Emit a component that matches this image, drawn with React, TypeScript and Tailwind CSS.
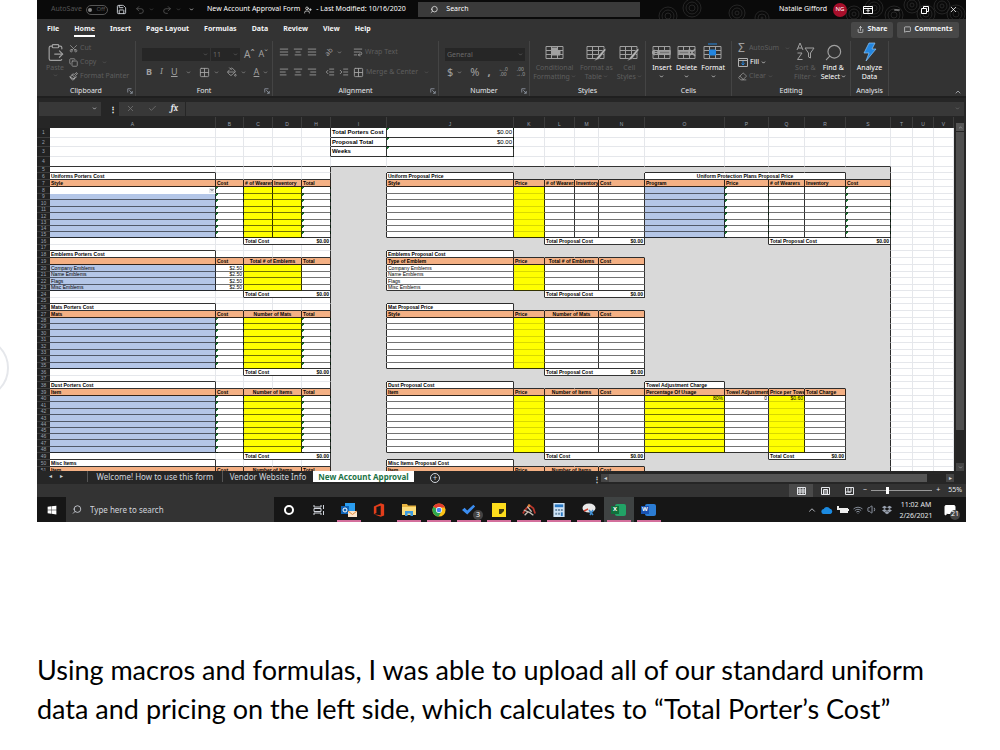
import type { ReactNode } from "react";
import clsx from "clsx";
import {
  AlignCenter,
  AlignJustify,
  AlignLeft,
  AlignRight,
  ChevronDown,
  ChevronUp,
  Check,
  ClipboardPaste,
  Copy,
  Eraser,
  Grid2x2,
  IndentDecrease,
  IndentIncrease,
  MessageSquare,
  Minus,
  PaintBucket,
  Paintbrush,
  Redo2,
  Save,
  Scissors,
  Search,
  Share,
  Undo2,
  UserPlus,
  Volume1,
  Wifi,
  WrapText,
  X,
} from "lucide-react";
import { FaDropbox, FaWindows } from "react-icons/fa";

/* ---------- Sheet data ---------- */

const COLUMNS = [
  { name: "A", width: "w-[166px]" },
  { name: "B", width: "w-[28px]" },
  { name: "C", width: "w-[29px]" },
  { name: "D", width: "w-[29px]" },
  { name: "H", width: "w-[29px]" },
  { name: "I", width: "w-[56px]" },
  { name: "J", width: "w-[127px]" },
  { name: "K", width: "w-[31px]" },
  { name: "L", width: "w-[30px]" },
  { name: "M", width: "w-[24px]" },
  { name: "N", width: "w-[46px]" },
  { name: "O", width: "w-[80px]" },
  { name: "P", width: "w-[44px]" },
  { name: "Q", width: "w-[36px]" },
  { name: "R", width: "w-[41px]" },
  { name: "S", width: "w-[45px]" },
  { name: "T", width: "w-[22px]" },
  { name: "U", width: "w-[21px]" },
  { name: "V", width: "" },
];

const ROW_COUNT = 51;
const TALL_ROWS = [1, 3, 4];
const MEDIUM_ROWS = [6, 7, 8, 10, 12, 16, 18, 19, 20, 22, 24, 26, 27, 30, 32, 34, 36, 38, 39, 41, 43, 47, 49, 50, 51];

type Head = { text: string; span?: number; fill?: string; flag?: boolean; faint?: boolean };

type Block = {
  col: string;
  row: number;
  title: string;
  titleSpan?: number;
  heads: Head[];
  body: number;
  values?: string[][];
  total?: { label: string; col: string; span: number };
};

type Cell = {
  content?: ReactNode;
  span?: number;
  line?: string;
  className: string;
};

const BLUE = "bg-[#b4c6e7]";
const YELLOW = "bg-[#ffff00]";
const ORANGE = "bg-[#f4b084]";

const EMBLEMS = ["Company Emblems", "Name Emblems", "Flags", "Misc Emblems"];

const cost = { label: "Total Cost", col: "C", span: 3 };
const proposal = { label: "Total Proposal Cost", col: "L", span: 3 };

const BLOCKS: Block[] = [
  {
    col: "A",
    row: 6,
    title: "Uniforms Porters Cost",
    heads: [
      { text: "Style", fill: BLUE },
      { text: "Cost", flag: true },
      { text: "# of Wearers", fill: YELLOW },
      { text: "Inventory", fill: YELLOW },
      { text: "Total", flag: true },
    ],
    body: 8,
    total: cost,
  },
  {
    col: "A",
    row: 18,
    title: "Emblems Porters Cost",
    heads: [
      { text: "", fill: BLUE },
      { text: "Cost" },
      { text: "Total # of Emblems", span: 2, fill: YELLOW },
      { text: "Total" },
    ],
    body: 4,
    values: EMBLEMS.map((name) => [name, "$2.50"]),
    total: cost,
  },
  {
    col: "A",
    row: 26,
    title: "Mats Porters Cost",
    heads: [
      { text: "Mats", fill: BLUE },
      { text: "Cost", flag: true },
      { text: "Number of Mats", span: 2, fill: YELLOW },
      { text: "Total", flag: true },
    ],
    body: 8,
    total: cost,
  },
  {
    col: "A",
    row: 38,
    title: "Dust Porters Cost",
    heads: [
      { text: "Item", fill: BLUE },
      { text: "Cost", flag: true },
      { text: "Number of Items", span: 2, fill: YELLOW },
      { text: "Total", flag: true },
    ],
    body: 9,
    total: cost,
  },
  {
    col: "A",
    row: 50,
    title: "Misc Items",
    heads: [{ text: "Item" }, { text: "Cost" }, { text: "Number of Items", span: 2 }, { text: "Total" }],
    body: 0,
  },
  {
    col: "J",
    row: 6,
    title: "Uniform Proposal Price",
    heads: [
      { text: "Style" },
      { text: "Price", fill: YELLOW, faint: true },
      { text: "# of Wearers" },
      { text: "Inventory" },
      { text: "Cost" },
    ],
    body: 8,
    total: proposal,
  },
  {
    col: "J",
    row: 18,
    title: "Emblems Proposal Cost",
    heads: [
      { text: "Type of Emblem" },
      { text: "Price", fill: YELLOW, faint: true },
      { text: "Total # of Emblems", span: 2 },
      { text: "Cost" },
    ],
    body: 4,
    values: EMBLEMS.map((name) => [name]),
    total: proposal,
  },
  {
    col: "J",
    row: 26,
    title: "Mat Proposal Price",
    heads: [
      { text: "Style" },
      { text: "Price", fill: YELLOW, faint: true },
      { text: "Number of Mats", span: 2 },
      { text: "Cost" },
    ],
    body: 8,
    total: proposal,
  },
  {
    col: "J",
    row: 38,
    title: "Dust Proposal Cost",
    heads: [
      { text: "Item" },
      { text: "Price", fill: YELLOW, faint: true },
      { text: "Number of Items", span: 2 },
      { text: "Cost" },
    ],
    body: 9,
    total: { label: "Total Cost", col: "L", span: 3 },
  },
  {
    col: "J",
    row: 50,
    title: "Misc Items Proposal Cost",
    heads: [{ text: "Item" }, { text: "Price" }, { text: "Number of Items", span: 2 }, { text: "Cost" }],
    body: 0,
  },
  {
    col: "O",
    row: 6,
    title: "Uniform Protection Plans Proposal Price",
    titleSpan: 4,
    heads: [
      { text: "Program", fill: BLUE },
      { text: "Price", flag: true },
      { text: "# of Wearers" },
      { text: "Inventory" },
      { text: "Cost", flag: true },
    ],
    body: 8,
    total: { label: "Total Proposal Cost", col: "Q", span: 3 },
  },
  {
    col: "O",
    row: 38,
    title: "Towel Adjustment Charge",
    heads: [
      { text: "Percentage Of Usage", fill: YELLOW },
      { text: "Towel Adjustment" },
      { text: "Price per Towel", fill: YELLOW, faint: true },
      { text: "Total Charge" },
    ],
    body: 9,
    values: [["80%", "0", "$0.60"]],
    total: { label: "Total Cost", col: "Q", span: 2 },
  },
];

const colIndex = (name: string) => COLUMNS.findIndex((c) => c.name === name);

function buildCells() {
  const cells = new Map<string, Cell>();
  const owned = new Set<string>();

  const put = (col: number, row: number, cell: Cell) => {
    cells.set(`${col},${row}`, cell);
    for (let i = 0; i < (cell.span ?? 1); i++) owned.add(`${col + i},${row}`);
  };

  for (const block of BLOCKS) {
    const start = colIndex(block.col);
    put(start, block.row, {
      content: block.title,
      span: block.titleSpan,
      className: clsx("bg-white font-bold", block.titleSpan && "text-center"),
    });

    let col = start;
    block.heads.forEach((head, h) => {
      put(col, block.row + 1, {
        content: head.text,
        span: head.span,
        className: clsx(ORANGE, "font-bold", head.span && "text-center"),
      });
      for (let i = 0; i < block.body; i++) {
        const value = block.values?.[i]?.[h];
        put(col, block.row + 2 + i, {
          content: value,
          span: head.span,
          line: i === block.body - 1 ? undefined : head.faint ? "border-b-black/15" : "border-b-black/55",
          className: clsx(
            head.fill ?? "bg-white",
            head.flag && "bg-[linear-gradient(135deg,#1d7a34_2px,transparent_2px)]",
            value && /\d/.test(value) && "text-right"
          ),
        });
      }
      col += head.span ?? 1;
    });

    if (block.total) {
      put(colIndex(block.total.col), block.row + 2 + block.body, {
        content: (
          <span className="flex justify-between">
            <span>{block.total.label}</span>
            <span>$0.00</span>
          </span>
        ),
        span: block.total.span,
        className: "bg-white font-bold",
      });
    }
  }

  // Summary in the top rows
  ["Total Porters Cost", "Proposal Total", "Weeks"].forEach((label, i) => {
    put(5, i + 1, { content: label, className: "bg-white font-bold text-[6px]" });
    put(6, i + 1, {
      content: i < 2 ? "$0.00" : "",
      className: "bg-white text-right text-[6px] bg-[linear-gradient(135deg,#1d7a34_2px,transparent_2px)]",
    });
  });

  // First style row holds the open pick list
  put(0, 8, {
    content: (
      <span className="flex justify-end">
        <button aria-label="Pick a style" className="flex h-[5px] w-[5px] items-center justify-center bg-gray-200">
          <ChevronDown size={4} strokeWidth={4} />
        </button>
      </span>
    ),
    line: "border-b-transparent",
    className: "bg-white",
  });

  return { cells, owned };
}

const { cells, owned } = buildCells();

function borderClasses(col: number, row: number, cell?: Cell) {
  const span = cell?.span ?? 1;
  const last = col + span - 1;
  const has = (c: number, r: number) => owned.has(`${c},${r}`);
  const gray = row >= 5 && col >= 5 && col <= 15;
  const right = has(last, row) || has(last + 1, row) || (row >= 5 && (last === 4 || last === 15));
  const bottom = has(col, row) || has(col, row + 1) || (row === 4 && col <= 15);
  return clsx(
    right ? "border-r-black/80" : gray ? "border-r-transparent" : "border-r-gray-200",
    cell?.line ?? (bottom ? "border-b-black/80" : gray ? "border-b-transparent" : "border-b-gray-200")
  );
}

function SheetRow({ row }: { row: number }) {
  const tds: ReactNode[] = [];
  for (let col = 0; col < COLUMNS.length; ) {
    const cell = cells.get(`${col},${row}`);
    const span = cell?.span ?? 1;
    const gray = row >= 5 && col >= 5 && col <= 15;
    tds.push(
      <td
        key={col}
        colSpan={span}
        className={clsx(
          "overflow-hidden border-r border-b px-px whitespace-nowrap",
          borderClasses(col, row, cell),
          cell ? cell.className : gray ? "bg-[#d9d9d9]" : "bg-white"
        )}
      >
        {cell?.content}
      </td>
    );
    col += span;
  }
  const height = TALL_ROWS.includes(row)
    ? "h-[10px]"
    : row === 2
      ? "h-[9px]"
      : MEDIUM_ROWS.includes(row)
        ? "h-[7px]"
        : "h-[6px]";
  return (
    <tr className={height}>
      <th scope="row" className="border-b border-[#3d3d3d] bg-[#222] text-center font-normal text-gray-400">
        {row}
      </th>
      {tds}
    </tr>
  );
}

function Sheet() {
  return (
    <div className="flex h-[354px] overflow-hidden bg-[#262626]">
      <div className="min-w-0 flex-1 overflow-hidden">
        <table className="w-full table-fixed border-separate border-spacing-0 font-['Liberation_Sans',sans-serif] text-[5px] leading-[5px] text-black">
          <colgroup>
            <col className="w-[13px]" />
            {COLUMNS.map((c) => (
              <col key={c.name} className={c.width} />
            ))}
          </colgroup>
          <thead>
            <tr className="h-[11px] bg-[#262626] text-gray-400">
              <th aria-label="Select all" />
              {COLUMNS.map((c) => (
                <th key={c.name} scope="col" className="border-r border-[#3d3d3d] pt-1 font-normal">
                  {c.name}
                </th>
              ))}
            </tr>
          </thead>
          <tbody>
            {Array.from({ length: ROW_COUNT }, (_, i) => (
              <SheetRow key={i} row={i + 1} />
            ))}
          </tbody>
        </table>
      </div>
      <div className="flex w-3 flex-col items-center gap-px px-0.5 pt-1.5">
        <button aria-label="Scroll up" className="flex h-2 w-full items-center justify-center bg-[#555] text-gray-300">
          <ChevronUp size={5} />
        </button>
        <div className="h-[298px] w-full bg-[#4f4f4f]" />
        <button aria-label="Scroll down" className="mt-auto flex h-2 w-full items-center justify-center bg-[#444] text-gray-300">
          <ChevronDown size={5} />
        </button>
      </div>
    </div>
  );
}

/* ---------- Ribbon ---------- */

function Caret({ className }: { className?: string }) {
  return <ChevronDown size={5} strokeWidth={3} className={clsx("shrink-0", className)} />;
}

function Dropdown({ label, value, className }: { label: string; value: string; className?: string }) {
  return (
    <label className={clsx("relative flex h-[13px] items-center bg-[#262626] text-[#6a6a6a]", className)}>
      <select aria-label={label} className="h-full w-full appearance-none bg-transparent px-0.5 text-[7px] leading-[9px] outline-none">
        <option>{value}</option>
      </select>
      <Caret className="pointer-events-none absolute right-0.5" />
    </label>
  );
}

function Group({ name, width, launcher, children }: { name: string; width: string; launcher?: boolean; children: ReactNode }) {
  return (
    <section className={clsx("relative flex shrink-0 flex-col border-r border-[#444]", width)}>
      <div className="h-[45px]">{children}</div>
      <h3 className="text-center text-[7px] leading-[10px] text-gray-200">{name}</h3>
      {launcher && (
        <svg viewBox="0 0 8 8" className="absolute right-0.5 bottom-0.5 h-1.5 w-1.5 text-gray-400" fill="none" stroke="currentColor">
          <path d="M1 6V1h5M3 3l4 4M7 4v3H4" />
        </svg>
      )}
    </section>
  );
}

function BigButton({ icon, lines, active }: { icon: ReactNode; lines: string[]; active?: boolean }) {
  return (
    <button className={clsx("flex flex-col items-center text-[7px] leading-[9px]", active ? "text-white" : "text-[#5e5e5e]")}>
      <span className="flex h-[22px] items-center text-[#a0a0a0]">{icon}</span>
      {lines.map((line, i) => (
        <span key={line} className="flex items-center gap-px whitespace-nowrap">
          {line}
          {i === 1 && line !== "Data" && <Caret />}
        </span>
      ))}
      {lines.length === 1 && <Caret className="mt-0.5" />}
    </button>
  );
}

function TableIcon({ kind }: { kind: "bars" | "brush" | "insert" | "delete" | "format" }) {
  const blue = kind === "format";
  return (
    <svg viewBox="0 0 20 18" className="h-[18px] w-5" fill="none" stroke="currentColor" strokeWidth="1">
      <path d="M1 3.500h17v12H1zM1 7.500h17M1 11.500h17M6.500 3.500v12M12.500 3.500v12" />
      {kind === "bars" && <path d="M7 5h5v3h3v4H7z" fill="currentColor" />}
      {kind === "brush" && <path d="M19 5l-7 8-4 5 5-2 7-9z" fill="#b5b5b5" stroke="#333" strokeWidth=".5" />}
      {kind === "insert" && <path d="M8 9.500H0M3 7L0 9.500 3 12M6 8h12v3H6z" strokeWidth="1.500" fill="#777" />}
      {kind === "delete" && <path d="M2 8h10v3H2zM12 6l6 7M18 6l-6 7" strokeWidth="1.500" fill="#777" />}
      {blue && <path d="M6.500 7h6v5h-6z" fill="#2386e0" stroke="#2386e0" />}
      {blue && <path d="M5 1h9" stroke="#2386e0" />}
    </svg>
  );
}

function Ribbon() {
  return (
    <div className="flex h-14 pt-px text-[7px] text-[#5e5e5e]">
      <Group name="Clipboard" width="w-[99px]" launcher>
        <div className="flex gap-1 pl-2">
          <button className="flex w-5 flex-col items-center pt-0.5">
            <ClipboardPaste size={19} strokeWidth={1.5} className="text-[#a0a0a0]" />
            <span className="leading-[11px]">Paste</span>
            <Caret />
          </button>
          <div className="flex flex-col">
            {[
              { text: "Cut", icon: <Scissors size={9} className="-rotate-90 text-[#a0a0a0]" /> },
              { text: "Copy", icon: <Copy size={9} className="text-[#a0a0a0]" />, caret: true },
              { text: "Format Painter", icon: <Paintbrush size={9} className="text-[#c0c0c0]" /> },
            ].map((item) => (
              <button key={item.text} className="flex h-3.5 items-center gap-0.5 whitespace-nowrap">
                {item.icon}
                {item.text}
                {item.caret && <Caret className="ml-1" />}
              </button>
            ))}
          </div>
        </div>
      </Group>

      <Group name="Font" width="w-[137px]" launcher>
        <div className="flex h-[22px] items-center pt-1 pl-1.5">
          <Dropdown label="Font" value="" className="w-[68px]" />
          <Dropdown label="Font size" value="11" className="ml-px w-[29px]" />
          <button className="ml-1 text-[10px] text-[#a0a0a0]">Aˆ</button>
          <button className="ml-1 text-[9px] text-[#a0a0a0]">Aˇ</button>
        </div>
        <div className="flex h-[18px] items-center gap-2 pl-2.5 text-[9px] text-[#a0a0a0]">
          <button className="font-bold">B</button>
          <button className="font-serif italic">I</button>
          <button className="underline">U</button>
          <Caret />
          <Grid2x2 size={11} />
          <Caret className="-ml-1" />
          <PaintBucket size={10} />
          <Caret className="-ml-1" />
          <button className="underline">A</button>
          <Caret className="-ml-1" />
        </div>
      </Group>

      <Group name="Alignment" width="w-[166px]" launcher>
        <div className="grid h-10 grid-cols-[74px_1fr] grid-rows-[22px_18px] pl-1.5">
          <div className="flex items-center gap-1 text-[#a0a0a0]">
            <AlignJustify size={10} />
            <AlignCenter size={10} />
            <AlignJustify size={10} />
            <span className="ml-1 -rotate-45 text-[7px]">ab</span>
            <Caret />
          </div>
          <button className="flex items-center gap-0.5">
            <WrapText size={10} className="text-[#a0a0a0]" />
            Wrap Text
          </button>
          <div className="flex items-center gap-1 text-[#a0a0a0]">
            <AlignLeft size={10} />
            <AlignCenter size={10} />
            <AlignRight size={10} />
            <IndentDecrease size={10} className="ml-1" />
            <IndentIncrease size={10} />
          </div>
          <button className="flex items-center gap-0.5 whitespace-nowrap">
            <Grid2x2 size={11} className="text-[#a0a0a0]" />
            Merge & Center
            <Caret className="ml-1" />
          </button>
        </div>
      </Group>

      <Group name="Number" width="w-[91px]" launcher>
        <div className="flex h-[22px] items-center pt-1 pl-1.5">
          <Dropdown label="Number format" value="General" className="w-20" />
        </div>
        <div className="flex h-[18px] items-center gap-2 pl-2 text-[11px] text-[#a0a0a0]">
          <button>$</button>
          <Caret className="-ml-1" />
          <button>%</button>
          <button className="font-bold">,</button>
          <button className="text-[5px] leading-[5px]">
            ←.0
            <br />
            .00
          </button>
          <button className="text-[5px] leading-[5px]">
            .00
            <br />
            →.0
          </button>
        </div>
      </Group>

      <Group name="Styles" width="w-[116px]">
        <div className="flex justify-center gap-1">
          <BigButton icon={<TableIcon kind="bars" />} lines={["Conditional", "Formatting"]} />
          <BigButton icon={<TableIcon kind="brush" />} lines={["Format as", "Table"]} />
          <BigButton icon={<TableIcon kind="brush" />} lines={["Cell", "Styles"]} />
        </div>
      </Group>

      <Group name="Cells" width="w-[86px]">
        <div className="flex justify-center gap-1">
          <BigButton active icon={<TableIcon kind="insert" />} lines={["Insert"]} />
          <BigButton active icon={<TableIcon kind="delete" />} lines={["Delete"]} />
          <BigButton active icon={<TableIcon kind="format" />} lines={["Format"]} />
        </div>
      </Group>

      <Group name="Editing" width="w-[119px]">
        <div className="flex pl-1.5">
          <div className="flex w-14 flex-col pr-1">
            <button className="flex h-3.5 items-center gap-1">
              <span className="text-[12px] leading-[14px] text-[#a0a0a0]">Σ</span>AutoSum
              <Caret className="ml-auto" />
            </button>
            <button className="flex h-3.5 items-center gap-0.5 text-white">
              <svg viewBox="0 0 10 9" className="h-[9px] w-2.5" fill="none" stroke="#b0b0b0">
                <path d="M.5.5h9v8h-9zM.5 2.500h9" />
                <path d="M5 3v4M3.500 5.500L5 7l1.500-1.500" stroke="#2386e0" />
              </svg>
              Fill <Caret />
            </button>
            <button className="flex h-3.5 items-center gap-0.5">
              <Eraser size={9} className="text-[#a0a0a0]" />
              Clear <Caret />
            </button>
          </div>
          <div className="flex gap-1">
            <BigButton
              icon={
                <svg viewBox="0 0 20 20" className="h-5 w-5" fill="none" stroke="currentColor">
                  <path d="M2 8l3-7 3 7M3 6h4M2.500 11H7l-4.500 6.500H7.500M10 6h9l-3.500 5v5l-2-1v-4z" />
                </svg>
              }
              lines={["Sort &", "Filter"]}
            />
            <BigButton active icon={<Search size={19} strokeWidth={1.5} className="-scale-x-100" />} lines={["Find &", "Select"]} />
          </div>
        </div>
      </Group>

      <Group name="Analysis" width="w-[38px]">
        <div className="flex justify-center">
          <BigButton
            active
            icon={
              <svg viewBox="0 0 14 20" className="h-5 w-3.5" fill="#2386e0" stroke="#8cc4f5" strokeWidth=".7">
                <path d="M6 1h6L9 7h4L3 19l3-8H1z" />
              </svg>
            }
            lines={["Analyze", "Data"]}
          />
        </div>
      </Group>
      <button aria-label="Collapse ribbon" className="mt-auto mr-1 ml-auto text-gray-300">
        <ChevronUp size={8} />
      </button>
    </div>
  );
}

function TitleBar() {
  return (
    <header className="relative flex h-[19px] items-center bg-[#0a0a0a] pr-2 pl-3.5 text-[7px] text-white">
      <svg viewBox="0 0 330 19" className="absolute top-0 right-0 h-[19px] w-[330px]" fill="none" stroke="#2c2c2c" strokeWidth=".8">
        {[
          [32, 16, 9], [56, 8, 9], [101, 13, 8], [126, 18, 7], [218, 14, 8], [238, 8, 9],
          [258, 15, 9], [276, 5, 8], [290, 14, 9], [306, 6, 8], [320, 14, 9],
        ].map(([x, y, r]) => (
          <g key={x}>
            <circle cx={x} cy={y} r={r} />
            <circle cx={x} cy={y} r={r - 3} />
            <circle cx={x} cy={y} r={r - 6} />
          </g>
        ))}
      </svg>
      <div className="flex w-[156px] items-center gap-2 text-[#555]">
        <span className="-mr-1">AutoSave</span>
        <label className="flex h-2.5 w-[22px] shrink-0 items-center justify-center gap-1 rounded-full border border-[#555] text-[6px]">
          <input type="checkbox" aria-label="AutoSave" className="h-1 w-1 shrink-0 appearance-none rounded-full bg-[#888]" />
          Off
        </label>
        <Save size={11} className="text-gray-300" />
        <Undo2 size={10} />
        <Caret className="-ml-1" />
        <Redo2 size={10} />
        <Caret className="-ml-1" />
        <Caret className="text-white" />
      </div>
      <h1 className="flex w-[211px] items-center gap-1 font-normal whitespace-nowrap">
        New Account Approval Form
        <UserPlus size={8} />
        <span>- Last Modified: 10/16/2020</span>
      </h1>
      <label className="flex h-[15px] w-[222px] items-center gap-2 bg-[#3a3a3a] pl-3">
        <Search size={9} className="-scale-x-100" />
        <input type="search" aria-label="Search" placeholder="Search" className="w-full bg-transparent outline-none placeholder:text-white" />
      </label>
      <div className="relative ml-auto flex items-center">
        Natalie Gifford
        <span className="ml-1.5 flex h-3.5 w-3.5 items-center justify-center rounded-full bg-[#a80f2b] text-[6px]">NG</span>
        <button aria-label="Ribbon display" className="ml-4">
          <svg viewBox="0 0 10 8" className="h-2 w-2.5" fill="none" stroke="currentColor">
            <path d="M.5.5h9v7h-9zM.5 2.500h9M5 6.500V4M3.500 5L5 3.500 6.500 5" />
          </svg>
        </button>
        <button aria-label="Minimize" className="ml-5">
          <Minus size={8} />
        </button>
        <button aria-label="Restore" className="ml-5">
          <svg viewBox="0 0 8 8" className="h-2 w-2" fill="none" stroke="currentColor">
            <path d="M.5 2.500h5v5h-5zM2.500 2.500v-2h5v5h-2" />
          </svg>
        </button>
        <button aria-label="Close" className="ml-5">
          <X size={9} />
        </button>
      </div>
    </header>
  );
}

const TABS = ["File", "Home", "Insert", "Page Layout", "Formulas", "Data", "Review", "View", "Help"];

function TabRow() {
  return (
    <nav className="flex h-[21px] items-center justify-between pr-[7px] pl-2.5 text-[7px] font-bold text-gray-100">
      <div className="flex items-center gap-[15px]">
        {TABS.map((tab) => (
          <a key={tab} href="#" className={clsx("border-b-2 leading-[13px]", tab === "Home" ? "border-white" : "border-transparent")}>
            {tab}
          </a>
        ))}
      </div>
      <div className="flex gap-1">
        <button className="flex h-4 w-[42px] items-center justify-center gap-1 rounded-xs bg-[#484848]">
          <Share size={7} /> Share
        </button>
        <button className="flex h-4 w-[62px] items-center justify-center gap-1 rounded-xs bg-[#484848]">
          <MessageSquare size={7} /> Comments
        </button>
      </div>
    </nav>
  );
}

function FormulaBar() {
  return (
    <div className="flex h-[21px] items-center gap-2 border-t-2 border-[#1f1f1f] bg-[#262626] pt-0.5 pr-0.5 pl-0.5">
      <label className="relative flex h-3.5 w-[62px] items-center bg-[#383838] text-gray-200">
        <input aria-label="Name box" className="w-full bg-transparent text-[7px] outline-none" />
        <Caret className="absolute right-1" />
      </label>
      <span className="w-0.5 text-[8px] font-bold text-white">⋮</span>
      <div className="flex h-3.5 flex-1 items-center bg-[#383838] pr-1 text-[#777]">
        <div className="flex w-[66px] items-center justify-around">
          <X size={9} />
          <Check size={9} />
          <span className="font-serif text-[9px] font-bold text-gray-200 italic">fx</span>
        </div>
        <input aria-label="Formula" className="h-full flex-1 border-l border-[#262626] bg-transparent px-1 text-[7px] outline-none" />
        <Caret />
      </div>
    </div>
  );
}

/* ---------- Bottom bars ---------- */

function SheetTabs() {
  return (
    <div className="flex h-[13px] items-start bg-[#262626] text-[8px] leading-[11px] text-gray-300">
      <div className="flex w-[50px] gap-2 pl-3 text-[6px]">
        <span>◂</span>
        <span>▸</span>
      </div>
      <button className="w-[135px] border-l border-[#555] whitespace-nowrap">Welcome! How to use this form</button>
      <button className="w-[91px] border-l border-[#555] whitespace-nowrap">Vendor Website Info</button>
      <button className="h-[11px] w-[101px] bg-white font-bold whitespace-nowrap text-[#217346]">New Account Approval</button>
      <button aria-label="New sheet" className="mt-0.5 ml-4 flex h-2.5 w-2.5 items-center justify-center rounded-full border border-gray-300 text-[8px] leading-none">
        +
      </button>
      <div className="mt-0.5 mr-3 ml-auto flex h-2.5 w-[361px] items-center text-[6px]">
        <span className="w-2 text-[8px] font-bold">⋮</span>
        <span className="flex h-2 w-2 items-center justify-center bg-[#444]">◂</span>
        <div className="h-2 w-[318px] bg-[#555]" />
        <span className="ml-auto flex h-2 w-2 items-center justify-center bg-[#444]">▸</span>
      </div>
    </div>
  );
}

function StatusBar() {
  return (
    <div className="flex h-[13px] items-center justify-end pr-1 text-[7px] text-gray-200">
      <button aria-label="Normal view" className="flex h-full w-6 items-center justify-center bg-[#4a4a4a]">
        <svg viewBox="0 0 9 8" className="h-2 w-[9px]" fill="none" stroke="currentColor">
          <path d="M.5.5h8v7h-8zM.5 3h8M.5 5h8M3 .5v7M6 .5v7" />
        </svg>
      </button>
      <button aria-label="Page layout view" className="flex w-6 justify-center">
        <svg viewBox="0 0 9 8" className="h-2 w-[9px]" fill="none" stroke="currentColor">
          <path d="M.5.5h8v7h-8zM2.500 2.500h4v5h-4zM3 4h3M3 6h3" />
        </svg>
      </button>
      <button aria-label="Page break view" className="flex w-6 justify-center">
        <svg viewBox="0 0 9 8" className="h-2 w-[9px]" fill="none" stroke="currentColor">
          <path d="M.5.5h8v7h-8zM3 .5v4.500h3V.5M.5 5h5" />
        </svg>
      </button>
      <span className="ml-0.5">−</span>
      <input
        type="range"
        aria-label="Zoom"
        defaultValue={25}
        className="mx-1 h-2 w-[61px] appearance-none bg-[linear-gradient(#999,#999)] bg-size-[100%_1px] bg-center bg-no-repeat [&::-webkit-slider-thumb]:h-[7px] [&::-webkit-slider-thumb]:w-[3px] [&::-webkit-slider-thumb]:appearance-none [&::-webkit-slider-thumb]:bg-white"
      />
      <span>+</span>
      <span className="ml-2">55%</span>
    </div>
  );
}

function OfficeTile({ letter, dark, light }: { letter: string; dark: string; light: string }) {
  return (
    <span className="flex h-3.5 w-4 items-center">
      <span className={clsx("z-10 flex h-2 w-2 items-center justify-center text-[6px] font-bold text-white", dark)}>{letter}</span>
      <span className={clsx("-ml-1 h-3 w-[11px] rounded-xs", light)} />
    </span>
  );
}

const APPS: { name: string; open?: boolean; active?: boolean; icon: ReactNode }[] = [
  {
    name: "Outlook",
    open: true,
    icon: (
      <svg viewBox="0 0 16 16" className="h-4 w-4">
        <path d="M4 1h10v11H4z" fill="#2a9df0" />
        <path d="M0 4h8v8H0z" fill="#0f62b5" />
        <circle cx="4" cy="8" r="2" fill="none" stroke="#fff" />
        <path d="M7 9h9v6H7z" fill="#fbe3c8" />
        <path d="M7 9l4.500 3.500L16 9" fill="none" stroke="#e08a3c" />
      </svg>
    ),
  },
  {
    name: "Office",
    icon: (
      <svg viewBox="0 0 14 16" className="h-3.5 w-3">
        <path d="M9 0l4 1.500v13L9 16 1 13l8 1V3L4 4.500v7L1 13V4z" fill="#e33e1b" />
      </svg>
    ),
  },
  {
    name: "File Explorer",
    open: true,
    icon: (
      <svg viewBox="0 0 16 14" className="h-3.5 w-4">
        <path d="M1 1h5l1 1.500h8V12H1z" fill="#e8b440" />
        <path d="M1 4h14v8H1z" fill="#fbdc7c" />
        <path d="M4 13V8h8v5h-2.500v-2.500h-3V13z" fill="#3d9be0" />
      </svg>
    ),
  },
  {
    name: "Chrome",
    open: true,
    icon: (
      <svg viewBox="0 0 16 16" className="h-3.5 w-3.5">
        <circle cx="8" cy="8" r="7.500" fill="#fbc116" />
        <path d="M8 8L1.500 4.300A7.500 7.500 0 0 1 14.800 5H8z" fill="#e33b2e" />
        <path d="M8 8L1.500 4.300A7.500 7.500 0 0 0 7.500 15.500L11 9.500z" fill="#2da94f" />
        <circle cx="8" cy="8" r="3.500" fill="#fff" />
        <circle cx="8" cy="8" r="2.700" fill="#4285f4" />
      </svg>
    ),
  },
  {
    name: "To Do",
    open: true,
    icon: (
      <svg viewBox="0 0 16 16" className="h-3.5 w-3.5">
        <path d="M0 8l3-2.500 3 3L13 2l2 2-9 9z" fill="#3b8df0" />
      </svg>
    ),
  },
  {
    name: "Sticky Notes",
    open: true,
    icon: (
      <svg viewBox="0 0 14 14" className="h-3.5 w-3.5">
        <path d="M0 0h14v14H0z" fill="#fddc1c" />
        <path d="M7 6h5v2L9 11H7z" fill="#413a10" />
      </svg>
    ),
  },
  {
    name: "Archer",
    open: true,
    icon: (
      <svg viewBox="0 0 16 16" className="h-3.5 w-3.5" fill="none" strokeWidth="1.500">
        <path d="M1 12l4-6 4-3 4 3 2 6" stroke="#b9372c" strokeWidth="2" />
        <path d="M2 8l7 3 4 3M6 4l5 6M3 14l4-4" stroke="#c8beb5" />
        <circle cx="8" cy="3" r="1.500" fill="#e3883c" />
      </svg>
    ),
  },
  {
    name: "Calculator",
    open: true,
    icon: (
      <svg viewBox="0 0 12 15" className="h-3.5 w-3">
        <path d="M0 0h12v15H0z" fill="#cfe3f5" />
        <path d="M1.500 1.500h9v3h-9z" fill="#2878c4" />
        <path d="M2 6.500h2v2H2zM5 6.500h2v2H5zM8 6.500h2v2H8zM2 10.500h2v2H2zM5 10.500h2v2H5z" fill="#6d8ba6" />
        <path d="M8 10h2v4H8z" fill="#2878c4" />
      </svg>
    ),
  },
  {
    name: "Snip & Sketch",
    open: true,
    icon: (
      <svg viewBox="0 0 16 16" className="h-4 w-4">
        <ellipse cx="8" cy="6" rx="6.500" ry="4.500" fill="#e8e8e8" />
        <path d="M3 9l4-2" stroke="#cf4030" strokeWidth="1.500" />
        <path d="M8 8l4 5M12 8l-3 5" stroke="#3f8fd4" strokeWidth="1.500" />
      </svg>
    ),
  },
  { name: "Excel", open: true, active: true, icon: <OfficeTile letter="X" dark="bg-[#10713c]" light="bg-[#21a366]" /> },
  { name: "Word", open: true, icon: <OfficeTile letter="W" dark="bg-[#1850b0]" light="bg-[#2b7cd3]" /> },
];

function Taskbar() {
  return (
    <footer className="flex h-[25px] items-center bg-[#161616] text-gray-300">
      <button aria-label="Start" className="flex h-full w-[29px] items-center justify-center text-white">
        <FaWindows size={10} />
      </button>
      <label className="flex h-full w-[208px] items-center gap-2 bg-[#333] pl-1.5">
        <Search size={11} className="-scale-x-100" />
        <input aria-label="Type here to search" placeholder="Type here to search" className="w-full bg-transparent text-[8px] outline-none placeholder:text-gray-300" />
      </label>
      <button aria-label="Cortana" className="flex w-[30px] justify-center">
        <span className="h-2.5 w-2.5 rounded-full border-2 border-white" />
      </button>
      <button aria-label="Task view" className="flex w-[30px] justify-center">
        <svg viewBox="0 0 12 12" className="h-3 w-3" fill="none" stroke="currentColor">
          <path d="M1 1v2M8 1v2M1 9v2M8 9v2M1 3h7M1 9h7M1 4.500h7v3H1zM10.500 1v4M10.500 7v4" />
        </svg>
      </button>
      {APPS.map((app) => (
        <button
          key={app.name}
          aria-label={app.name}
          className={clsx("relative flex h-full w-[30px] items-center justify-center", app.active && "bg-[#3f4343]")}
        >
          {app.icon}
          {app.name === "To Do" && (
            <span className="absolute right-px bottom-0.5 flex h-2.5 w-2.5 items-center justify-center rounded-full bg-[#444] text-[7px] text-white">3</span>
          )}
          {app.open && <span className="absolute inset-x-[3px] bottom-0 h-0.5 bg-[#d36f9c]" />}
        </button>
      ))}
      <div className="ml-auto flex items-center gap-1 pr-2.5">
        <ChevronUp size={10} />
        <svg viewBox="0 0 12 8" className="h-2 w-3" fill="#1b8ae0">
          <path d="M3 8a2.500 2.500 0 0 1-.3-5A3.500 3.500 0 0 1 9 2.800 2.700 2.700 0 0 1 9.500 8z" />
        </svg>
        <svg viewBox="0 0 12 8" className="h-2 w-3" fill="#eee">
          <path d="M0 0h2v2h9v5H3V4H0zM11 3h1v2h-1z" />
        </svg>
        <Wifi size={10} className="text-gray-400" />
        <Volume1 size={11} className="text-gray-400" />
        <FaDropbox size={10} className="text-gray-400" />
        <p className="w-10 text-center text-[7px] leading-[11px] whitespace-nowrap text-gray-200">
          11:02 AM
          <br />
          2/26/2021
        </p>
        <button aria-label="Notifications" className="relative ml-1 text-white">
          <MessageSquare size={12} fill="currentColor" />
          <span className="absolute -right-1 -bottom-1 flex h-2.5 w-2.5 items-center justify-center rounded-full bg-[#444] text-[7px]">21</span>
        </button>
      </div>
    </footer>
  );
}

export default function App() {
  return (
    <main className="relative min-h-screen overflow-hidden bg-white pr-[34px] pl-[37px] font-['Noto_Sans',sans-serif]">
      <button aria-label="Previous" className="absolute top-[337px] -left-[53px] h-[62px] w-[62px] rounded-full border-2 border-gray-200" />

      <div className="overflow-hidden bg-[#333]">
        <TitleBar />
        <TabRow />
        <Ribbon />
        <FormulaBar />
        <Sheet />
        <SheetTabs />
        <StatusBar />
        <Taskbar />
      </div>

      <p className="mt-32 font-['Lato',sans-serif] text-[27px] leading-[39px] text-black">
        Using macros and formulas, I was able to upload all of our standard uniform
        <br />
        data and pricing on the left side, which calculates to “Total Porter’s Cost”
      </p>
    </main>
  );
}
